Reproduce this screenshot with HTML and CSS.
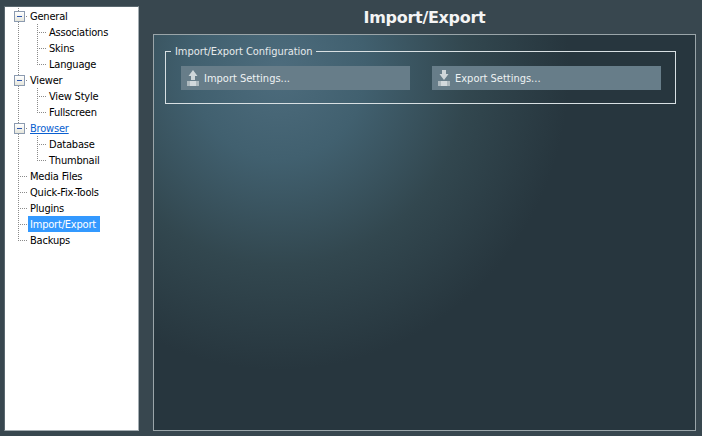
FILE: index.html
```html
<!DOCTYPE html>
<html>
<head>
<meta charset="utf-8">
<title>Import/Export</title>
<link rel="stylesheet" href="styles.css">
</head>
<body>
<div class="app">
  <nav class="tree">
    <div class="row"><span class="cell box"></span><span class="label">General</span></div>
    <div class="row"><span class="cell line"></span><span class="cell tee"></span><span class="label">Associations</span></div>
    <div class="row"><span class="cell line"></span><span class="cell tee"></span><span class="label">Skins</span></div>
    <div class="row"><span class="cell line"></span><span class="cell elbow"></span><span class="label">Language</span></div>
    <div class="row"><span class="cell box"></span><span class="label">Viewer</span></div>
    <div class="row"><span class="cell line"></span><span class="cell tee"></span><span class="label">View Style</span></div>
    <div class="row"><span class="cell line"></span><span class="cell elbow"></span><span class="label">Fullscreen</span></div>
    <div class="row"><span class="cell box"></span><span class="label link">Browser</span></div>
    <div class="row"><span class="cell line"></span><span class="cell tee"></span><span class="label">Database</span></div>
    <div class="row"><span class="cell line"></span><span class="cell elbow"></span><span class="label">Thumbnail</span></div>
    <div class="row"><span class="cell tee"></span><span class="label">Media Files</span></div>
    <div class="row"><span class="cell tee"></span><span class="label">Quick-Fix-Tools</span></div>
    <div class="row"><span class="cell tee"></span><span class="label">Plugins</span></div>
    <div class="row"><span class="cell tee"></span><span class="label selected">Import/Export</span></div>
    <div class="row"><span class="cell elbow"></span><span class="label">Backups</span></div>
  </nav>
  <main class="content">
    <h1 class="title">Import/Export</h1>
    <section class="panel">
      <fieldset class="group">
        <legend class="legend">Import/Export Configuration</legend>
        <div class="actions">
          <button class="action" type="button">
            <svg class="icon" width="12" height="16" viewBox="0 0 12 16"><path class="glyph" d="M6 0 10.5 6H8V10H4V6H1.5Z"/><path class="tray" d="M0 11H12V16H0Z"/><path class="shine" d="M3 11H9V16H3Z"/></svg>
            <span class="caption">Import Settings...</span>
          </button>
          <button class="action" type="button">
            <svg class="icon" width="12" height="16" viewBox="0 0 12 16"><path class="glyph" d="M4 0H8V4H10.5L6 10 1.5 4H4Z"/><path class="tray" d="M0 11H12V16H0Z"/><path class="shine" d="M3 11H9V16H3Z"/></svg>
            <span class="caption">Export Settings...</span>
          </button>
        </div>
      </fieldset>
    </section>
  </main>
</div>
</body>
</html>
```
FILE: styles.css
```css
* { box-sizing: border-box; }
html, body { margin: 0; height: 100%; }
body {
  width: 702px;
  height: 436px;
  overflow: hidden;
  background: #38474f;
  font-family: "DejaVu Sans Condensed", "DejaVu Sans", sans-serif;
}
.app {
  display: flex;
  height: 436px;
  padding: 6px 6px 5px 4px;
  gap: 14px;
}
.tree {
  width: 135px;
  height: 425px;
  padding: 1px 0 0 5px;
  background: #fff;
  border: 1px solid #a4adb2;
  border-left-color: #5a686f;
  border-top-color: #5a686f;
}
.row {
  display: flex;
  height: 16px;
  font-size: 11px;
  line-height: 16px;
  color: #000;
  letter-spacing: -0.2px;
}
.cell {
  flex: none;
  width: 19px;
  height: 16px;
  background-repeat: no-repeat;
}
.line {
  background-image: repeating-linear-gradient(to bottom, #8a8a8a 0 1px, transparent 1px 2px);
  background-size: 1px 100%;
  background-position: 8px 0;
}
.tee, .box {
  background-image:
    repeating-linear-gradient(to bottom, #8a8a8a 0 1px, transparent 1px 2px),
    repeating-linear-gradient(to right, #8a8a8a 0 1px, transparent 1px 2px);
  background-size: 1px 100%, 9px 1px;
  background-position: 8px 0, 8px 8px;
}
.elbow {
  background-image:
    repeating-linear-gradient(to bottom, #8a8a8a 0 1px, transparent 1px 2px),
    repeating-linear-gradient(to right, #8a8a8a 0 1px, transparent 1px 2px);
  background-size: 1px 8px, 9px 1px;
  background-position: 8px 0, 8px 8px;
}
.box {
  display: flex;
  align-items: center;
}
.box::after {
  content: "";
  width: 9px;
  height: 9px;
  margin: 0 0 0 4px;
  border: 1px solid #8c9bb0;
  background: linear-gradient(#2c56b0, #2c56b0) center / 5px 1px no-repeat, linear-gradient(#fff, #e6e6dc);
}
.label {
  height: 16px;
  padding: 0 2px;
  margin-left: -1px;
  line-height: 18px;
  white-space: nowrap;
}
.link {
  color: #0a5fd0;
  text-decoration: underline;
}
.selected {
  padding-right: 4px;
  background: #3399ff;
  color: #fff;
}
.content {
  flex: 1;
  display: flex;
  flex-direction: column;
  min-width: 0;
}
.title {
  margin: 0;
  height: 28px;
  font-family: "DejaVu Sans", Verdana, sans-serif;
  font-size: 16px;
  font-weight: 700;
  line-height: 24px;
  text-align: center;
  color: #f4f4f4;
  letter-spacing: -0.3px;
}
.panel {
  flex: 1;
  padding: 9px 19px 0 11px;
  border: 1px solid #9aa5a9;
  background: radial-gradient(ellipse 290px 300px at 125px 35px, #4d6c7d 0%, #41606f 30%, #32474f 65%, #27363e 100%);
}
.group {
  margin: 0;
  padding: 8px 14px 0 15px;
  height: 60px;
  border: 1px solid #d8e0e3;
  min-width: 0;
}
.legend {
  padding: 0 4px;
  margin-left: -10px;
  height: 14px;
  font-size: 11px;
  line-height: 16px;
  color: #e6eaec;
  letter-spacing: -0.05px;
}
.actions {
  display: flex;
  justify-content: space-between;
}
.action {
  display: flex;
  align-items: center;
  gap: 5px;
  width: 229px;
  height: 24px;
  padding: 0 0 0 6px;
  border: 0;
  background: #677d89;
  color: #eef2f3;
  font: 11px/24px "DejaVu Sans Condensed", "DejaVu Sans", sans-serif;
}
.caption { padding-top: 1px; }
.icon { flex: none; }
.glyph { fill: #cfd6d9; }
.tray { fill: #aeb9be; }
.shine { fill: #d3d9dc; }
```
